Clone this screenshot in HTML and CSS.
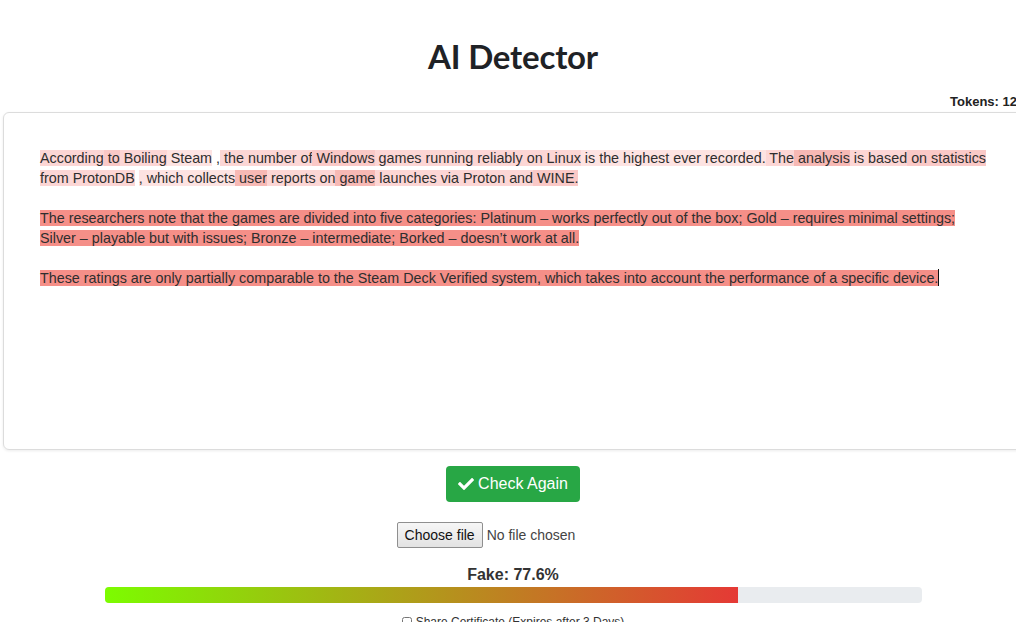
FILE: index.html
```html
<!DOCTYPE html>
<html lang="en">
<head>
<meta charset="utf-8">
<title>AI Detector</title>
<link rel="stylesheet" href="styles.css">
</head>
<body>
<div class="page">
  <h1 class="title">AI Detector</h1>
  <div class="tokens">Tokens: 12</div>
  <div class="editor">
    <p><span class="h2">According</span><span class="h3"> to</span><span class="h2"> Boiling</span><span class="h1"> Steam</span> ,<span class="h2"> the number of</span><span class="h3"> Windows</span><span class="h2"> games running reliably</span><span class="h2"> on Linux</span><span class="h1"> is the highest ever recorded.</span><span class="h2"> The</span><span class="h4"> analysis</span><span class="h2"> is based</span><span class="h3"> on statistics</span><br><span class="h2">from</span><span class="h2"> ProtonDB</span> <span class="h1">, which collects</span><span class="h4"> user</span><span class="h2"> reports on</span><span class="h4"> game</span><span class="h2"> launches via</span><span class="h2"> Proton</span><span class="h2"> and</span><span class="h3"> WINE.</span></p>
    <p><span class="h5">The researchers note that the games are divided into five categories: Platinum – works perfectly out of the box; Gold – requires minimal settings; </span><br><span class="h5">Silver – playable but with issues; Bronze – intermediate; Borked – doesn’t work at all.</span></p>
    <p><span class="h5">These ratings are only partially comparable to the Steam Deck Verified system, which takes into account the performance of a specific device.</span><span class="caret"></span></p>
  </div>
  <div class="actions">
    <button class="btn-check" type="button">
      <svg class="check" viewBox="0 0 512 512" aria-hidden="true"><path d="M173.898 439.404l-166.4-166.4c-9.997-9.997-9.997-26.206 0-36.204l36.203-36.204c9.997-9.998 26.207-9.998 36.204 0L192 312.69 432.095 72.596c9.997-9.997 26.207-9.997 36.204 0l36.203 36.204c9.997 9.997 9.997 26.206 0 36.204l-294.4 294.401c-9.998 9.997-26.207 9.997-36.204-.001z"/></svg>
      Check Again
    </button>
    <div class="file">
      <button class="file-btn" type="button">Choose file</button>
      <span class="file-name">No file chosen</span>
    </div>
  </div>
  <div class="result">
    <div class="label">Fake: 77.6%</div>
    <div class="bar"><div class="fill" style="width: 77.6%"></div></div>
    <label class="share"><input type="checkbox"> Share Certificate (Expires after 3 Days)</label>
  </div>
</div>
</body>
</html>
```

FILE: styles.css
```css
html, body {
  margin: 0;
  padding: 0;
  background: #fff;
  overflow: hidden;
}

body {
  font-family: "Liberation Sans", Arial, sans-serif;
  color: #212529;
}

.page {
  width: 1020px;
  margin-left: 3px;
  display: flex;
  flex-direction: column;
}

.title {
  margin: 34px 0 0;
  text-align: center;
  font-family: "Lato", "Inter", sans-serif;
  font-weight: 700;
  font-size: 33px;
  line-height: 44px;
  color: #1f2226;
  letter-spacing: -0.2px;
}

.tokens {
  margin-top: 16px;
  text-align: right;
  padding-right: 6px;
  font-size: 13px;
  font-weight: 700;
  line-height: 16px;
  color: #222;
}

.editor {
  margin-top: 2px;
  height: 338px;
  box-sizing: border-box;
  border: 1px solid #dcdcdc;
  border-radius: 6px;
  box-shadow: 0 1px 3px rgba(0,0,0,0.08);
  padding: 35px 28px 0 36px;
  font-size: 14.34px;
  line-height: 20px;
  color: #2e2e2e;
}

.editor p {
  margin: 0 0 20px;
}

.h1 { background: #fde3e2; }
.h2 { background: #fcd6d5; }
.h3 { background: #fac9c7; }
.h4 { background: #f7b9b5; }
.h5 { background: #f58f88; }

.caret {
  display: inline-block;
  width: 1px;
  height: 17px;
  background: #111;
  vertical-align: -3px;
}

.actions {
  display: flex;
  flex-direction: column;
  align-items: center;
  margin-top: 16px;
  gap: 20px;
}

.btn-check {
  display: inline-flex;
  align-items: center;
  gap: 4px;
  height: 36px;
  padding: 0 12px;
  border: none;
  border-radius: 4px;
  background: #28a745;
  color: #fff;
  font-family: "Liberation Sans", Arial, sans-serif;
  font-size: 16px;
}

.check {
  width: 16px;
  height: 16px;
  fill: #fff;
}

.file {
  display: flex;
  align-items: center;
  gap: 4px;
  margin-left: -54px;
}

.file-btn {
  height: 26px;
  padding: 0 7px;
  border: 1px solid #8f8f8f;
  border-radius: 2px;
  background: linear-gradient(#f6f6f6, #e3e3e3);
  font-family: "Liberation Sans", Arial, sans-serif;
  font-size: 14px;
  color: #111;
}

.file-name {
  font-size: 14px;
  color: #444;
}

.result {
  display: flex;
  flex-direction: column;
  align-items: center;
  margin-top: 17px;
}

.label {
  font-size: 16px;
  font-weight: 700;
  line-height: 20px;
  color: #333;
}

.bar {
  margin-top: 2px;
  width: 817px;
  height: 16px;
  border-radius: 4px;
  background: #e9ecef;
  overflow: hidden;
}

.fill {
  height: 100%;
  background: linear-gradient(to right, #7cfc00, #e53935);
}

.share {
  margin-top: 12px;
  font-size: 12px;
  color: #333;
  display: flex;
  align-items: center;
  gap: 2px;
}

.share input {
  width: 10px;
  height: 10px;
  margin: 0 2px 0 0;
}
```
